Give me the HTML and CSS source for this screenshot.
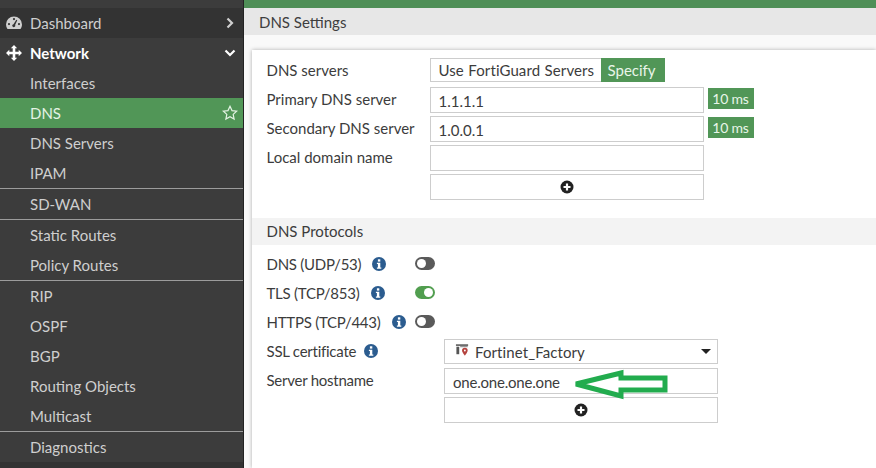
FILE: index.html
```html
<!DOCTYPE html>
<html lang="en">
<head>
<meta charset="utf-8">
<title>DNS Settings</title>
<link rel="stylesheet" href="styles.css">
</head>
<body>
<div class="app">
  <nav class="sidebar">
    <a class="item top">
      <svg class="mi" viewBox="0 0 16 14"><path fill="#cfcfcf" fill-rule="evenodd" d="M8 .5a8 8 0 0 1 8 8c0 1.800-.6 3.300-1.500 4.500H1.500A7.800 7.800 0 0 1 0 8.500a8 8 0 0 1 8-8zM8 2a1.100 1.100 0 1 0 0 2.200A1.100 1.100 0 0 0 8 2zM3 7a1.100 1.100 0 1 0 0 2.200A1.100 1.100 0 0 0 3 7zM13 7a1.100 1.100 0 1 0 0 2.200A1.100 1.100 0 0 0 13 7zM10.300 3.800L7.500 8.200a1.500 1.500 0 1 0 1.600.8l2.200-4.700z"/></svg>
      <span>Dashboard</span>
      <svg class="chev" viewBox="0 0 10 12"><path d="M2.500 1.500L7 6l-4.500 4.500" fill="none" stroke="#cfcfcf" stroke-width="2.200"/></svg>
    </a>
    <a class="item open">
      <svg class="mi" viewBox="0 0 16 16"><path fill="#fff" d="M8 0l3.200 3.300H9.300v3.400h3.400V4.800L16 8l-3.300 3.200V9.300H9.300v3.400h1.900L8 16l-3.200-3.300h1.900V9.300H3.300v1.900L0 8l3.300-3.200v1.900h3.400V3.300H4.800z"/></svg>
      <span>Network</span>
      <svg class="chev" viewBox="0 0 12 10"><path d="M1.500 2.500L6 7l4.500-4.500" fill="none" stroke="#fff" stroke-width="2.200"/></svg>
    </a>
    <a class="item">Interfaces</a>
    <a class="item active">DNS
      <svg class="star" viewBox="0 0 16 16"><path d="M8 1.300l2 4.300 4.700.6-3.500 3.200.9 4.700L8 11.800l-4.100 2.300.9-4.700L1.300 6.200 6 5.600z" fill="none" stroke="#e4f3e4" stroke-width="1.200"/></svg>
    </a>
    <a class="item">DNS Servers</a>
    <a class="item">IPAM</a>
    <a class="item sep">SD-WAN</a>
    <a class="item sep">Static Routes</a>
    <a class="item">Policy Routes</a>
    <a class="item sep">RIP</a>
    <a class="item">OSPF</a>
    <a class="item">BGP</a>
    <a class="item">Routing Objects</a>
    <a class="item">Multicast</a>
    <a class="item sep">Diagnostics</a>
    <div class="side-foot"></div>
  </nav>
  <main class="main">
    <div class="topbar"></div>
    <header class="page-head">DNS Settings</header>
    <section class="card">
      <div class="form upper">
        <label class="lbl">DNS servers</label>
        <div class="seg"><span class="seg-off">Use FortiGuard Servers</span><span class="seg-on">Specify</span></div>
        <label class="lbl">Primary DNS server</label>
        <div class="with-badge"><div class="box">1.1.1.1</div><span class="badge">10 ms</span></div>
        <label class="lbl">Secondary DNS server</label>
        <div class="with-badge"><div class="box">1.0.0.1</div><span class="badge">10 ms</span></div>
        <label class="lbl">Local domain name</label>
        <div class="box"></div>
        <span></span>
        <div class="box add"><svg class="plus" viewBox="0 0 14 14"><circle cx="7" cy="7" r="6.500" fill="#222"/><path d="M7 3.500v7M3.500 7h7" stroke="#fff" stroke-width="2.200"/></svg></div>
      </div>
      <h2 class="section-head">DNS Protocols</h2>
      <div class="protocols">
        <div class="p-row"><span class="p-lbl">DNS (UDP/53)</span><svg class="info i1" viewBox="0 0 14 14"><use href="#info"/></svg><span class="toggle t1 off"></span></div>
        <div class="p-row"><span class="p-lbl">TLS (TCP/853)</span><svg class="info i2" viewBox="0 0 14 14"><use href="#info"/></svg><span class="toggle t2 on"></span></div>
        <div class="p-row"><span class="p-lbl">HTTPS (TCP/443)</span><svg class="info i3" viewBox="0 0 14 14"><use href="#info"/></svg><span class="toggle t3 off"></span></div>
        <div class="p-row ctl first">
          <span class="p-lbl">SSL certificate</span><svg class="info i4" viewBox="0 0 14 14"><use href="#info"/></svg>
          <div class="box select">
            <svg class="cert" viewBox="0 0 16 14"><path d="M1 1h13v1.500H1z" fill="#444"/><path d="M1.500 3.500h3v8h-3z" fill="#555"/><path d="M5.500 3h8v1H5.500z" fill="#777"/><path d="M10.500 4.500a3 3 0 0 1 3 3c0 2-3 5.500-3 5.500s-3-3.500-3-5.500a3 3 0 0 1 3-3z" fill="#b5433f"/><circle cx="10.500" cy="7.500" r="1" fill="#fff"/></svg>
            <span class="cert-name">Fortinet_Factory</span>
            <i class="caret"></i>
          </div>
        </div>
        <div class="p-row ctl"><span class="p-lbl">Server hostname</span><div class="box host">one.one.one.one</div></div>
        <div class="p-row ctl"><span class="p-lbl"></span><div class="box add"><svg class="plus" viewBox="0 0 14 14"><circle cx="7" cy="7" r="6.500" fill="#222"/><path d="M7 3.500v7M3.500 7h7" stroke="#fff" stroke-width="2.200"/></svg></div></div>
      </div>
    </section>
    <svg class="arrow" viewBox="0 0 96 30"><path d="M3 15L48 4v5h44v12H48v6z" fill="none" stroke="#22ac4e" stroke-width="5" stroke-linejoin="miter"/></svg>
  </main>
</div>
<svg class="defs" width="0" height="0"><defs><g id="info"><circle cx="7" cy="7" r="7" fill="#2b5c8f"/><rect x="5.900" y="2.300" width="2.400" height="2.300" fill="#fff"/><path d="M4.900 5.700h3.400v4.700h1v1.400H4.900v-1.400h1V7.100h-1z" fill="#fff"/></g></defs></svg>
</body>
</html>
```
FILE: styles.css
```css
* { box-sizing: border-box; }
html, body { margin: 0; height: 100%; overflow: hidden; }
body { font-family: Lato, "Open Sans", sans-serif; font-size: 15px; color: #3c3c3c; background: #fff; }
.app { display: flex; height: 468px; }

.sidebar { width: 243px; flex: none; background: #3c3c3c; padding-top: 8px; display: flex; flex-direction: column; }
.item { display: flex; align-items: center; height: 30px; padding-left: 30px; color: #cfcfcf; position: relative; flex: none; }
.item.top { background: #333; }
.item.open { color: #fff; font-weight: 700; }
.item.active { background: #519657; color: #e4f3e4; }
.item.sep { height: 31px; border-top: 1px solid #9c9c9c; }
.mi { position: absolute; left: 6px; top: 7px; width: 16px; height: 16px; }
.chev { position: absolute; left: 224px; top: 9px; width: 12px; height: 12px; }
.star { position: absolute; left: 222px; top: 7px; width: 16px; height: 16px; }
.side-foot { flex: 1; background: #333; }

.main { flex: 1; min-width: 0; position: relative; display: flex; flex-direction: column; border-left: 1px solid #222; background: #f9f9f9; }
.topbar { height: 8px; background: #4f8f57; }
.page-head { height: 27px; background: #e7e7e7; padding-left: 15px; line-height: 28px; color: #3e3e3e; }
.card { margin: 15px 0 0 8px; padding-top: 8px; flex: 1; background: #fff; box-shadow: 0 0 4px rgba(0,0,0,.3); }

.form { display: grid; grid-template-columns: 163px 1fr; row-gap: 3px; padding-left: 14.5px; }
.lbl { height: 26px; line-height: 25px; }
.seg { display: flex; height: 24px; margin-bottom: 2px; }
.seg-off { width: 171px; border: 1px solid #cdcdcd; border-right: 0; padding-left: 8px; line-height: 22px; word-spacing: .5px; letter-spacing: .1px; }
.seg-on { width: 64px; background: #519657; color: #e9f5e9; padding-left: 7px; line-height: 24px; }
.box { width: 274px; height: 26px; border: 1px solid #cdcdcd; background: #fff; padding-left: 8px; line-height: 26px; flex: none; }
.with-badge { display: flex; align-items: flex-start; gap: 3px; }
.badge { margin-left: 1px; margin-top: 1px; width: 46px; height: 21px; background: #519657; color: #e9f5e9; font-size: 14px; text-align: center; line-height: 21px; letter-spacing: -.2px; }
.add { display: flex; align-items: center; justify-content: center; padding: 0; }
.plus { width: 14px; height: 14px; }

.section-head { margin: 18px 0 0; height: 27px; background: #f3f3f3; padding-left: 14.5px; font-size: 15px; font-weight: 400; line-height: 27px; color: #3c3c3c; }
.protocols { padding: 4px 0 0 14.5px; }
.p-row { display: flex; align-items: center; height: 29px; position: relative; }
.p-lbl { flex: none; letter-spacing: -.25px; }
.info { width: 14px; height: 14px; flex: none; }
.i1 { margin-left: 11px; }
.i2 { margin-left: 12px; }
.i3 { margin-left: 11px; }
.i4 { margin-left: 8px; }
.toggle { width: 20px; height: 13px; border-radius: 7px; flex: none; position: relative; }
.toggle::after { content: ""; position: absolute; top: 2px; width: 9px; height: 9px; border-radius: 50%; background: #fff; }
.t1 { margin-left: 29px; }
.t2 { margin-left: 30px; }
.t3 { margin-left: 9px; }
.toggle.off { background: #5a5a5a; }
.toggle.off::after { left: 2px; }
.toggle.on { background: #519e4f; }
.toggle.on::after { left: 9px; }
.ctl .box { position: absolute; left: 177.5px; top: 3px; }
.ctl.first .box { height: 25px; }
.select { display: flex; align-items: center; gap: 5px; padding-left: 10px; line-height: 24px; }
.cert { width: 15px; height: 14px; margin-top: -4px; }
.cert-name { letter-spacing: .1px; }
.caret { position: absolute; right: 6px; top: 9px; border: 5px solid transparent; border-top: 5px solid #222; border-bottom: 0; }
.host { letter-spacing: -.2px; }

.arrow { position: absolute; left: 329px; top: 369px; width: 96px; height: 30px; overflow: visible; }
.defs { position: absolute; }
```
